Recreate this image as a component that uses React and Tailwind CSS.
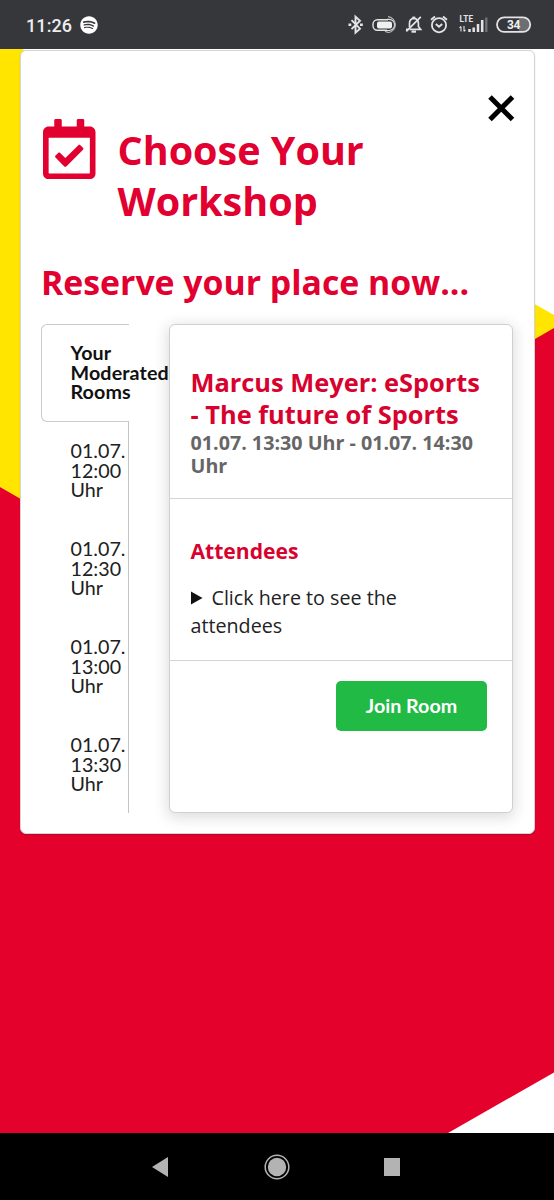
import { FaSpotify, FaRegCalendarCheck } from "react-icons/fa";

const slots = ["12:00", "12:30", "13:00", "13:30"];

const StatusIcons = () => {
    return (
        <svg className="h-[49px] w-[194px]" viewBox="340 0 194 49" fill="none" stroke="#e4e4e6" strokeWidth="1.6">
            {/* bluetooth */}
            <path d="M351.500 20.200l8.500 8.500-4.500 4V16.700l4.500 4-8.500 8.500" strokeWidth="1.900" />
            <path d="M348.500 24.800h2.800M360 24.800h2.800" strokeWidth="2.500" />
            {/* battery of the headset */}
            <path d="M387 30.300h-9.500a4.500 4.500 0 0 1-4.500-4.500v-1.500a4.500 4.500 0 0 1 4.500-4.500H388" strokeWidth="1.400" />
            <rect x="377" y="21.500" width="15" height="7" rx="2" fill="#f0f0f1" stroke="none" />
            <path d="M387 19.300h2a5.600 5.600 0 0 1 0 11.200h-3" strokeWidth="1.200" />
            <path d="M388 16.700a8 8 0 0 1 1 15.800q-2 0-4-1.200" strokeWidth="1.200" stroke="#b4b4b7" />
            {/* muted bell */}
            <path d="M409.500 27v-3.500q0-5 4.300-5.200 4.600 0.200 4.600 5.200v3l2.200 2.800h-11" strokeWidth="1.700" />
            <path d="M406.300 31.300l14.500-14.500M406 29.300h2.500" strokeWidth="1.800" />
            <path d="M411.500 31.600h4.500" strokeWidth="2.200" />
            <path d="M412.300 17.500h3" strokeWidth="1.800" />
            {/* alarm */}
            <circle cx="439" cy="25.200" r="7.100" strokeWidth="1.800" />
            <path d="M435.800 24l3.200 2.800 3.200-2.800M431 19.800l4-3.300M447 19.800l-4-3.300" strokeWidth="1.800" />
            {/* signal */}
            <text x="459.500" y="22" fill="#e4e4e6" stroke="none" fontFamily="Roboto" fontWeight="700" fontSize="8.200" textLength="13.500">LTE</text>
            <path d="M461 31.500v-5M459.500 28l1.500-1.700M464 26v5.500M465.500 29.800L464 31.500" strokeWidth="1.100" />
            <path d="M469.500 32v-3M473.700 32v-4.500M478 32v-8M482.200 32V20" strokeWidth="2.500" />
            <path d="M486.300 32V17.500" strokeWidth="2.300" stroke="#737477" />
            {/* phone battery */}
            <path d="M519 18.200h5a6.500 6.500 0 0 1 0 13h-5z" fill="#6d6e71" stroke="none" />
            <rect x="497" y="17.300" width="33.200" height="14.600" rx="7.300" strokeWidth="1.800" />
            <text x="507" y="29" fill="#f0f0f1" stroke="none" fontFamily="Roboto" fontWeight="700" fontSize="12" textLength="13.500">34</text>
        </svg>
    );
};

const StatusBar = () => {
    return (
        <div className="flex h-[49px] shrink-0 items-center justify-between bg-[#36373b] pl-[26px] pr-5">
            <div className="flex items-center gap-[8px] text-[#ececee]">
                <span className="pt-[2px] font-[Roboto] text-[18px] font-medium tracking-[0.1px]">11:26</span>
                <FaSpotify className="h-[18px] w-[18px] text-white" />
            </div>
            <StatusIcons />
        </div>
    );
};

const Backdrop = () => {
    return (
        <svg className="absolute inset-0 h-full w-full" viewBox="0 49 554 1084" preserveAspectRatio="none">
            <path d="M0 49h554v1084H0z" fill="#fff" />
            <path d="M0 49h22L500 284.500l54 30.500v60L277 660 0 487z" fill="#ffe500" />
            <path d="M0 487L277 647 535 339l19-11v744.500L448 1133H0z" fill="#e4022d" />
        </svg>
    );
};

const RoomMenu = () => {
    return (
        <div className="flex w-[88px] flex-col font-[Lato,sans-serif] text-[19.7px] leading-[19.6px]">
            <div className="h-[98px] whitespace-nowrap rounded-l-[6px] border border-r-0 border-[#cbcbcc] pl-[28.5px] pt-[18px] font-bold tracking-[0.12px] text-[#111]">
                <div>Your</div>
                <div>Moderated</div>
                <div>Rooms</div>
            </div>
            <div className="-mt-px flex-1 border-r border-[#c4c4c5] pl-[29.5px] text-[#202020]">
                {slots.map((slot) => (
                    <div key={slot} className="h-[98px] pt-[20px]">
                        <div>01.07.</div>
                        <div>{slot}</div>
                        <div>Uhr</div>
                    </div>
                ))}
            </div>
        </div>
    );
};

const RoomCard = () => {
    return (
        <div className="relative flex w-[344px] flex-col rounded-[6px] border border-[#d0d0d1] bg-white shadow-[0_3px_14px_2px_rgba(34,36,38,0.15)]">
            <div className="h-[174px] border-b border-[#d4d4d5] pl-[20.5px] pt-[41px]">
                <h3 className="whitespace-nowrap text-[25.4px] font-bold leading-[32.4px] text-[#d8022f]">
                    Marcus Meyer: eSports<br />- The future of Sports
                </h3>
                <p className="whitespace-nowrap text-[19.7px] font-bold leading-[23.6px] text-[#666]">
                    01.07. 13:30 Uhr - 01.07. 14:30<br />Uhr
                </p>
            </div>
            <div className="h-[162px] border-b border-[#d4d4d5] pl-[20.5px] pt-[38px]">
                <h4 className="text-[21.100px] font-bold leading-[27px] text-[#d8022f]">Attendees</h4>
                <div className="mt-[20px] text-[19.7px] leading-[28px] text-[#222]">
                    <div className="flex items-center">
                        <svg className="mr-[9px] h-[14px] w-[12px]" viewBox="0 0 12 14">
                            <path d="M0 0.500L11.500 7L0 13.500z" fill="#111" />
                        </svg>
                        Click here to see the
                    </div>
                    <div>attendees</div>
                </div>
            </div>
            <div className="flex justify-end pr-[25px] pt-[20px]">
                <button className="h-[50px] w-[151px] rounded-[5px] bg-[#21ba45] font-[Lato,sans-serif] text-[19.7px] font-bold text-white">Join Room</button>
            </div>
        </div>
    );
};

const App = () => {
    return (
        <div className="flex h-[1200px] w-[554px] flex-col overflow-hidden bg-black font-['Open_Sans',sans-serif]">
            <StatusBar />
            <div className="relative h-[1084px] shrink-0">
                <Backdrop />
                <div className="relative ml-[20px] mt-px h-[784px] w-[515px] rounded-[6px] border border-[#d4d4d5] bg-white pl-[20px] pr-[21px] shadow-[0_1px_1px_rgba(34,36,38,0.25)]">
                    <button className="absolute right-[18px] top-[42px]">
                        <svg className="h-[30px] w-[30px]" viewBox="0 0 30 30" stroke="#000" strokeWidth="5">
                            <path d="M4 4l22.500 22.500M26.500 4L4 26.500" />
                        </svg>
                    </button>
                    <div className="flex h-[206px] pt-[68px]">
                        <FaRegCalendarCheck className="ml-[2px] h-[60px] w-[52.500px] text-[#e1002f]" />
                        <h1 className="ml-[22px] pt-[6px] text-[39.5px] font-bold leading-[50.7px] text-[#e1002f]">
                            Choose Your<br />Workshop
                        </h1>
                    </div>
                    <h2 className="h-[67px] whitespace-nowrap pt-[3px] text-[33.8px] font-bold leading-[44px] text-[#e1002f]">Reserve your place now...</h2>
                    <div className="flex h-[489px] justify-between">
                        <RoomMenu />
                        <RoomCard />
                    </div>
                </div>
            </div>
            <div className="flex h-[67px] items-center justify-center">
                <svg className="h-[30px] w-[260px]" viewBox="147 1152 260 30" fill="#b3b3b3">
                    <path d="M152 1167l16-10v20z" />
                    <circle cx="277" cy="1167" r="9.200" />
                    <circle cx="277" cy="1167" r="11.800" fill="none" stroke="#b3b3b3" strokeWidth="1.500" />
                    <path d="M384 1158h16v18h-16z" />
                </svg>
            </div>
        </div>
    );
};

export default App;
